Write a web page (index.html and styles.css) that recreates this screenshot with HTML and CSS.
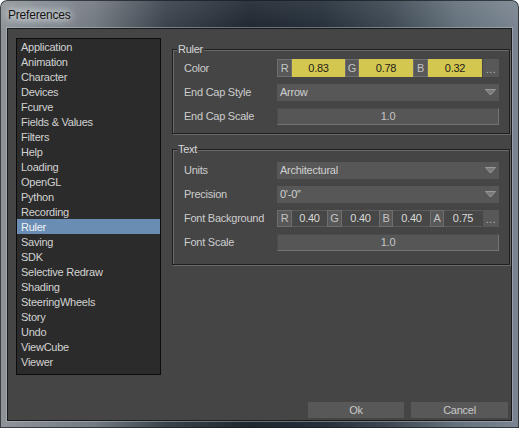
FILE: index.html
```html
<!DOCTYPE html>
<html>
<head>
<meta charset="utf-8">
<link rel="stylesheet" href="styles.css">
</head>
<body>
<div class="window">
  <div class="titlebar"><span class="title">Preferences</span></div>
  <div class="client">
    <ul class="catlist">
      <li>Application</li>
      <li>Animation</li>
      <li>Character</li>
      <li>Devices</li>
      <li>Fcurve</li>
      <li>Fields &amp; Values</li>
      <li>Filters</li>
      <li>Help</li>
      <li>Loading</li>
      <li>OpenGL</li>
      <li>Python</li>
      <li>Recording</li>
      <li class="selected">Ruler</li>
      <li>Saving</li>
      <li>SDK</li>
      <li>Selective Redraw</li>
      <li>Shading</li>
      <li>SteeringWheels</li>
      <li>Story</li>
      <li>Undo</li>
      <li>ViewCube</li>
      <li>Viewer</li>
    </ul>
    <div class="panel">
      <div class="group group-ruler">
        <span class="group-title">Ruler</span>
        <div class="row">
          <span class="label">Color</span>
          <div class="multi">
            <span class="chan w15">R</span><span class="val yellow w53">0.83</span>
            <span class="chan w14">G</span><span class="val yellow w54">0.78</span>
            <span class="chan w15">B</span><span class="val yellow w54">0.32</span>
            <span class="more">...</span>
          </div>
        </div>
        <div class="row">
          <span class="label">End Cap Style</span>
          <div class="combo"><span>Arrow</span><svg class="arrow" width="11" height="7" viewBox="0 0 11 7"><polygon points="0.5,0.5 10.5,0.5 5.5,6" fill="#7a7a7a" stroke="#9a9a9a" stroke-width="1"/></svg></div>
        </div>
        <div class="row">
          <span class="label">End Cap Scale</span>
          <div class="numfield">1.0</div>
        </div>
      </div>
      <div class="group group-text">
        <span class="group-title">Text</span>
        <div class="row">
          <span class="label">Units</span>
          <div class="combo"><span>Architectural</span><svg class="arrow" width="11" height="7" viewBox="0 0 11 7"><polygon points="0.5,0.5 10.5,0.5 5.5,6" fill="#7a7a7a" stroke="#9a9a9a" stroke-width="1"/></svg></div>
        </div>
        <div class="row">
          <span class="label">Precision</span>
          <div class="combo"><span>0'-0"</span><svg class="arrow" width="11" height="7" viewBox="0 0 11 7"><polygon points="0.5,0.5 10.5,0.5 5.5,6" fill="#7a7a7a" stroke="#9a9a9a" stroke-width="1"/></svg></div>
        </div>
        <div class="row">
          <span class="label">Font Background</span>
          <div class="multi short">
            <span class="chan w15">R</span><span class="val dark w35">0.40</span>
            <span class="chan w15">G</span><span class="val dark w37">0.40</span>
            <span class="chan w14">B</span><span class="val dark w37">0.40</span>
            <span class="chan w14">A</span><span class="val dark w38">0.75</span>
            <span class="more">...</span>
          </div>
        </div>
        <div class="row">
          <span class="label">Font Scale</span>
          <div class="numfield">1.0</div>
        </div>
      </div>
    </div>
    <div class="buttons">
      <button class="btn btn-ok">Ok</button>
      <button class="btn btn-cancel">Cancel</button>
    </div>
  </div>
</div>
</body>
</html>
```
FILE: styles.css
```css
html, body {
  margin: 0;
  padding: 0;
  background: #ffffff;
}
body {
  width: 519px;
  height: 428px;
  overflow: hidden;
  font-family: "Liberation Sans", Arial, sans-serif;
  font-size: 11px;
  letter-spacing: -0.25px;
}
.window {
  box-sizing: border-box;
  width: 519px;
  height: 428px;
  padding: 0 7px 7px 7px;
  display: flex;
  flex-direction: column;
  border-radius: 7px 7px 0 0;
  background:
    linear-gradient(to bottom, rgba(255,255,255,0.08), rgba(0,0,0,0) 30px),
    linear-gradient(to right, #8e9499 0%, #737a81 18%, #3a424b 32%, #1f2730 48%, #26303a 62%, #3d4852 75%, #64707b 88%, #7a8591 100%);
  box-shadow: inset 0 0 0 1px rgba(20,25,30,0.7);
}
.titlebar {
  height: 28px;
  flex: none;
  display: flex;
  align-items: center;
  padding-left: 1px;
}
.title {
  font-family: "Liberation Sans", Arial, sans-serif;
  font-size: 12px;
  letter-spacing: -0.2px;
  color: #141414;
  text-shadow: 0 0 6px #e8ecef, 0 0 10px #dfe4e8, 0 0 16px #cfd5da, 0 0 22px #b8c0c6;
  margin-top: 2px;
}
.client {
  flex: 1;
  box-sizing: border-box;
  background: #454545;
  border: 1px solid #1a1a1a;
  box-shadow: 0 0 0 1px rgba(190,200,210,0.45);
  display: grid;
  grid-template-columns: 145px 1fr;
  grid-template-rows: 1fr 16px;
  column-gap: 11px;
  padding: 9px 1px 2px 8px;
}
.catlist {
  list-style: none;
  margin: 0;
  padding: 0;
  box-sizing: border-box;
  height: 337px;
  align-self: start;
  background: #2b2b2b;
  border: 1px solid #0c0c0c;
}
.catlist li {
  height: 15px;
  line-height: 16px;
  padding-left: 4px;
  color: #d2d2d2;
  white-space: nowrap;
}
.catlist li.selected {
  background: #6a8db4;
  color: #eef2f6;
}
.panel {
  padding-top: 11px;
  display: flex;
  flex-direction: column;
}
.group {
  position: relative;
  border: 1px solid #1e1e1e;
  box-shadow: 1px 1px 0 #6a6a6a, inset 1px 1px 0 #6a6a6a;
  padding: 6px 10px 5px 11px;
}
.group-text {
  margin-top: 15px;
  padding: 8px 10px 10px 11px;
}
.group-title {
  position: absolute;
  top: -7px;
  left: 4px;
  line-height: 13px;
  padding: 0 1px;
  background: #454545;
  color: #d6d6d6;
}
.row {
  height: 24px;
  display: flex;
  align-items: center;
}
.label {
  width: 93px;
  flex: none;
  color: #cdcdcd;
  white-space: nowrap;
}
.multi {
  display: flex;
  height: 18px;
  width: 222px;
}
.multi.short {
  height: 17px;
}
.chan {
  box-sizing: border-box;
  flex: none;
  background: #585858;
  border: 1px solid #6e6e6e;
  color: #c4c4c4;
  display: flex;
  align-items: center;
  justify-content: center;
}
.val {
  box-sizing: border-box;
  flex: none;
  display: flex;
  align-items: center;
  justify-content: center;
}
.yellow {
  background: #d4c74f;
  color: #1c1c1c;
}
.dark {
  background: #474747;
  border: 1px solid #5c5c5c;
  border-left: none;
  border-right: none;
  color: #dadada;
}
.more {
  box-sizing: border-box;
  width: 16px;
  margin-left: 1px;
  flex: none;
  background: #585858;
  color: #bdbdbd;
  display: flex;
  align-items: flex-end;
  justify-content: center;
  padding-bottom: 2px;
  letter-spacing: 0.5px;
  font-size: 10px;
}
.w14 { width: 14px; }
.w15 { width: 15px; }
.w35 { width: 35px; }
.w37 { width: 37px; }
.w38 { width: 38px; }
.w53 { width: 53px; }
.w54 { width: 54px; }
.combo {
  box-sizing: border-box;
  width: 222px;
  height: 17px;
  background: #575757;
  display: flex;
  align-items: center;
  justify-content: space-between;
  padding: 0 3px 0 3px;
  color: #d0d0d0;
}
.arrow {
  display: block;
  margin-top: 1px;
}
.numfield {
  box-sizing: border-box;
  width: 222px;
  height: 17px;
  background: #565656;
  border: 1px solid;
  border-color: #4c4c4c #737373 #737373 #4c4c4c;
  display: flex;
  align-items: center;
  justify-content: center;
  color: #c6c6c6;
}
.buttons {
  grid-column: 2;
  grid-row: 2;
  display: flex;
  justify-content: flex-end;
  gap: 7px;
  padding-right: 2px;
}
.btn {
  box-sizing: border-box;
  height: 16px;
  margin: 0;
  padding: 0;
  border: none;
  background: #585858;
  color: #c8c8c8;
  font-family: "Liberation Sans", Arial, sans-serif;
  font-size: 11px;
  letter-spacing: -0.25px;
  line-height: 16px;
}
.btn-ok { width: 96px; }
.btn-cancel { width: 97px; }
```
